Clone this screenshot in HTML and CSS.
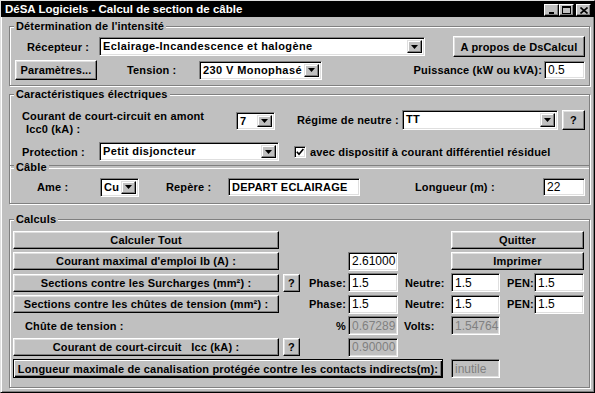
FILE: index.html
```html
<!DOCTYPE html>
<html lang="fr">
<head>
<meta charset="utf-8">
<title>DéSA Logiciels - Calcul de section de câble</title>
<link rel="stylesheet" href="styles.css">
</head>
<body>
<div class="window">
  <div class="titlebar">
    <span class="title">DéSA Logiciels - Calcul de section de câble</span>
    <div class="tbtns">
      <span class="tbtn"><svg width="8" height="7" viewBox="0 0 8 7"><rect x="1" y="5" width="5" height="2" fill="#000"/></svg></span>
      <span class="tbtn"><svg width="9" height="8" viewBox="0 0 9 8"><rect x="0.5" y="0.5" width="8" height="7" fill="none" stroke="#000"/><rect x="0" y="0" width="9" height="2" fill="#000"/></svg></span>
      <span class="tbtn close"><svg width="8" height="7" viewBox="0 0 8 7"><path d="M0.5 0.5 L7.5 6.5 M7.5 0.5 L0.5 6.5" stroke="#000" stroke-width="1.6"/></svg></span>
    </div>
  </div>

  <div class="group g1">
    <div class="legend">Détermination de l'intensité</div>
    <div class="row r1">
      <span class="lab lab-recep">Récepteur :</span>
      <div class="combo c-recep"><span class="val">Eclairage-Incandescence et halogène</span><span class="arr"><svg width="7" height="4" viewBox="0 0 7 4"><polygon points="0,0 7,0 3.5,4" fill="#000"/></svg></span></div>
      <button class="btn b-apropos">A propos de DsCalcul</button>
    </div>
    <div class="row r2">
      <button class="btn b-param">Paramètres...</button>
      <span class="lab lab-tension">Tension :</span>
      <div class="combo c-tension"><span class="val">230 V Monophasé</span><span class="arr"><svg width="7" height="4" viewBox="0 0 7 4"><polygon points="0,0 7,0 3.5,4" fill="#000"/></svg></span></div>
      <span class="lab lab-puis">Puissance (kW ou kVA):</span>
      <input class="field f-puis" type="text" value="0.5">
    </div>
  </div>

  <div class="group g2">
    <div class="legend">Caractéristiques électriques</div>
    <div class="row ra">
      <span class="lab lab-icc">Courant de court-circuit en amont<br><span class="indent">Icc0 (kA) :</span></span>
      <div class="combo c-icc"><span class="val">7</span><span class="arr"><svg width="7" height="4" viewBox="0 0 7 4"><polygon points="0,0 7,0 3.5,4" fill="#000"/></svg></span></div>
      <span class="lab lab-regime">Régime de neutre :</span>
      <div class="combo c-regime"><span class="val">TT</span><span class="arr"><svg width="7" height="4" viewBox="0 0 7 4"><polygon points="0,0 7,0 3.5,4" fill="#000"/></svg></span></div>
      <button class="btn b-help">?</button>
    </div>
    <div class="row rb">
      <span class="lab lab-prot">Protection :</span>
      <div class="combo c-prot"><span class="val">Petit disjoncteur</span><span class="arr"><svg width="7" height="4" viewBox="0 0 7 4"><polygon points="0,0 7,0 3.5,4" fill="#000"/></svg></span></div>
      <span class="check"><svg width="8" height="8" viewBox="0 0 8 8"><polyline points="0.8,3.8 3,6.2 7.4,1" fill="none" stroke="#000" stroke-width="1.7"/></svg></span>
      <span class="lab lab-check">avec dispositif à courant différentiel résiduel</span>
    </div>
    <div class="sep"><span class="sep-lab">Câble</span></div>
    <div class="row rc">
      <span class="lab lab-ame">Ame :</span>
      <div class="combo c-cu"><span class="val">Cu</span><span class="arr"><svg width="7" height="4" viewBox="0 0 7 4"><polygon points="0,0 7,0 3.5,4" fill="#000"/></svg></span></div>
      <span class="lab lab-rep">Repère :</span>
      <input class="field txt f-rep" type="text" value="DEPART ECLAIRAGE">
      <span class="lab lab-long">Longueur (m) :</span>
      <input class="field f-long" type="text" value="22">
    </div>
  </div>

  <div class="group g3">
    <div class="legend">Calculs</div>
    <div class="calc">
      <button class="btn cb r-1">Calculer Tout</button>
      <button class="btn wide r-1">Quitter</button>

      <button class="btn cb r-2">Courant maximal d'emploi Ib (A) :</button>
      <input class="field nf r-2" type="text" value="2.61000">
      <button class="btn wide r-2">Imprimer</button>

      <button class="btn cb r-3">Sections contre les Surcharges (mm²) :</button>
      <button class="btn qh r-3">?</button>
      <span class="lab pl r-3">Phase:</span>
      <input class="field nf r-3" type="text" value="1.5">
      <span class="lab nl r-3">Neutre:</span>
      <input class="field nn r-3" type="text" value="1.5">
      <span class="lab pen r-3">PEN:</span>
      <input class="field np r-3" type="text" value="1.5">

      <button class="btn cb r-4">Sections contre les chûtes de tension (mm²) :</button>
      <span class="lab pl r-4">Phase:</span>
      <input class="field nf r-4" type="text" value="1.5">
      <span class="lab nl r-4">Neutre:</span>
      <input class="field nn r-4" type="text" value="1.5">
      <span class="lab pen r-4">PEN:</span>
      <input class="field np r-4" type="text" value="1.5">

      <span class="lab chute r-5">Chûte de tension :</span>
      <span class="lab pl r-5">%</span>
      <input class="field nf dis r-5" type="text" value="0.67289" disabled>
      <span class="lab vl r-5">Volts:</span>
      <input class="field nn dis r-5" type="text" value="1.54764" disabled>

      <button class="btn cb r-6">Courant de court-circuit   Icc (kA) :</button>
      <button class="btn qh r-6">?</button>
      <input class="field nf dis r-6" type="text" value="0.90000" disabled>

      <button class="btn def r-7">Longueur maximale de canalisation protégée contre les contacts indirects(m):</button>
      <input class="field nn dis r-7" type="text" value="inutile" disabled>
    </div>
  </div>
</div>
</body>
</html>
```
FILE: styles.css
```css
* { box-sizing: border-box; }
body {
  margin: 0;
  background: #c0c0c0;
  font-family: "Liberation Sans", Arial, sans-serif;
  font-size: 11px;
  font-weight: bold;
  letter-spacing: 0.15px;
  color: #000;
}
.window {
  width: 595px;
  height: 393px;
  background: #c0c0c0;
  border: 1px solid;
  border-color: #dfdfdf #000 #000 #dfdfdf;
  box-shadow: inset 1px 1px #fff, inset -1px -1px #808080;
  overflow: hidden;
}
.titlebar {
  height: 16px;
  background: #000;
  color: #fff;
  display: flex;
  align-items: center;
  justify-content: space-between;
  padding: 0 3px 0 4px;
  font-size: 11.5px;
  letter-spacing: 0;
}
.title { line-height: 16px; white-space: nowrap; }
.tbtns { display: flex; margin-top: 2px; }
.tbtn {
  width: 15px;
  height: 12px;
  background: #c0c0c0;
  border: 1px solid;
  border-color: #fff #000 #000 #fff;
  box-shadow: inset -1px -1px #808080;
  display: flex;
  align-items: center;
  justify-content: center;
}
.tbtn.close { margin-left: 2px; }

.group {
  width: 581px;
  margin-left: 8px;
  border: 1px solid #808080;
  box-shadow: inset 1px 1px #fff, 1px 1px #fff;
}
.legend {
  width: max-content;
  height: 13px;
  line-height: 13px;
  margin: -7px 0 0 4px;
  padding: 0 2px;
  background: #c0c0c0;
}
.g1 { margin-top: 9px; padding-bottom: 5px; }
.g2 { margin-top: 8px; padding-bottom: 6px; }
.g3 { margin-top: 15px; padding-bottom: 9px; }

.row { display: flex; align-items: center; }
.lab { white-space: nowrap; flex: none; }

.btn {
  flex: none;
  display: flex;
  align-items: center;
  justify-content: center;
  margin: 0;
  padding: 0;
  background: #c0c0c0;
  border: 1px solid;
  border-color: #fff #000 #000 #fff;
  box-shadow: inset -1px -1px #808080, inset 1px 1px #dfdfdf;
  font: inherit;
  letter-spacing: inherit;
  color: #000;
  white-space: pre;
}
.btn.def {
  border-color: #000;
  box-shadow: inset 1px 1px #fff, inset -1px -1px #000, inset -2px -2px #808080;
}

.combo {
  flex: none;
  display: flex;
  height: 19px;
  background: #fff;
  border: 1px solid;
  border-color: #808080 #fff #fff #808080;
  box-shadow: inset 1px 1px #000, inset -1px -1px #dfdfdf;
  padding: 2px;
}
.combo .val {
  flex: 1;
  padding-left: 1px;
  line-height: 13px;
  letter-spacing: 0.4px;
  white-space: nowrap;
  overflow: hidden;
}
.combo .arr {
  width: 15px;
  background: #c0c0c0;
  border: 1px solid;
  border-color: #dfdfdf #000 #000 #dfdfdf;
  box-shadow: inset -1px -1px #808080, inset 1px 1px #fff;
  display: flex;
  align-items: center;
  justify-content: center;
}

.field {
  flex: none;
  height: 19px;
  margin: 0;
  background: #fff;
  border: 1px solid;
  border-color: #808080 #fff #fff #808080;
  box-shadow: inset 1px 1px #000, inset -1px -1px #dfdfdf;
  padding: 0 0 0 3px;
  font-family: "Liberation Sans", Arial, sans-serif;
  font-size: 12px;
  font-weight: normal;
  letter-spacing: 0;
  color: #000;
  outline: none;
}
.field.txt { font-size: 11px; font-weight: bold; letter-spacing: 0.2px; }
.field.dis { background: #c0c0c0; color: #808080; }

/* group 1 */
.r1 { margin-top: 3px; height: 21px; }
.lab-recep { margin-left: 17px; width: 72px; }
.c-recep { width: 326px; }
.b-apropos { margin-left: 28px; width: 132px; height: 21px; }
.r2 { margin-top: 3px; height: 20px; }
.b-param { margin-left: 5px; width: 82px; height: 20px; }
.lab-tension { margin-left: 30px; width: 72px; }
.c-tension { width: 123px; }
.lab-puis { width: 222px; text-align: right; padding-right: 2px; }
.f-puis { width: 41px; height: 18px; }

/* group 2 */
.ra { margin-top: 9px; height: 26px; align-items: flex-start; }
.lab-icc { margin-left: 12px; width: 214px; line-height: 13px; }
.indent { margin-left: 4px; }
.c-icc { width: 39px; height: 18px; margin-top: 2px; }
.lab-regime { margin-left: 22px; width: 105px; margin-top: 4px; }
.c-regime { width: 156px; height: 20px; }
.b-help { margin-left: 4px; width: 23px; height: 20px; }
.rb { margin-top: 6px; height: 19px; }
.lab-prot { margin-left: 12px; width: 77px; }
.c-prot { width: 180px; }
.check {
  flex: none;
  margin-left: 15px;
  width: 12px;
  height: 12px;
  background: #fff;
  border: 1px solid;
  border-color: #808080 #fff #fff #808080;
  box-shadow: inset 1px 1px #000, inset -1px -1px #dfdfdf;
  display: flex;
  align-items: center;
  justify-content: center;
}
.lab-check { margin-left: 4px; }
.sep { display: flex; align-items: center; height: 12px; line-height: 12px; }
.sep::before, .sep::after {
  content: "";
  height: 2px;
  border-top: 1px solid #808080;
  border-bottom: 1px solid #fff;
}
.sep::before { width: 4px; flex: none; }
.sep::after { flex: 1; }
.sep-lab { padding: 0 2px; }
.rc { margin-top: 4px; height: 20px; }
.lab-ame { margin-left: 27px; width: 63px; }
.c-cu { width: 39px; }
.lab-rep { margin-left: 27px; width: 62px; }
.f-rep { width: 132px; height: 18px; }
.lab-long { margin-left: 55px; width: 128px; }
.f-long { width: 42px; height: 18px; }

/* group 3 */
.calc {
  margin-top: 4px;
  display: grid;
  grid-template-columns: 3px 266px 4px 17px 48px 50px 53px 49px 34px 50px;
  grid-template-rows: repeat(7, 19px);
  row-gap: 2.5px;
  align-items: center;
}
.calc .btn { height: 18px; }
.calc .field { height: 19px; width: 100%; }
.r-1 { grid-row: 1; }
.r-2 { grid-row: 2; }
.r-3 { grid-row: 3; }
.r-4 { grid-row: 4; }
.r-5 { grid-row: 5; }
.r-6 { grid-row: 6; }
.r-7 { grid-row: 7; }
.cb { grid-column: 2; }
.wide { grid-column: 8 / 11; }
.qh { grid-column: 4; }
.pl { grid-column: 5; text-align: right; padding-right: 2px; }
.nf { grid-column: 6; }
.nl { grid-column: 7; padding-left: 7px; }
.vl { grid-column: 7; padding-left: 6px; }
.nn { grid-column: 8; }
.pen { grid-column: 9; padding-left: 7px; }
.np { grid-column: 10; }
.chute { grid-column: 2; padding-left: 12px; }
.btn.def { grid-column: 2 / 8; margin-right: 8px; height: 19px; }
```
